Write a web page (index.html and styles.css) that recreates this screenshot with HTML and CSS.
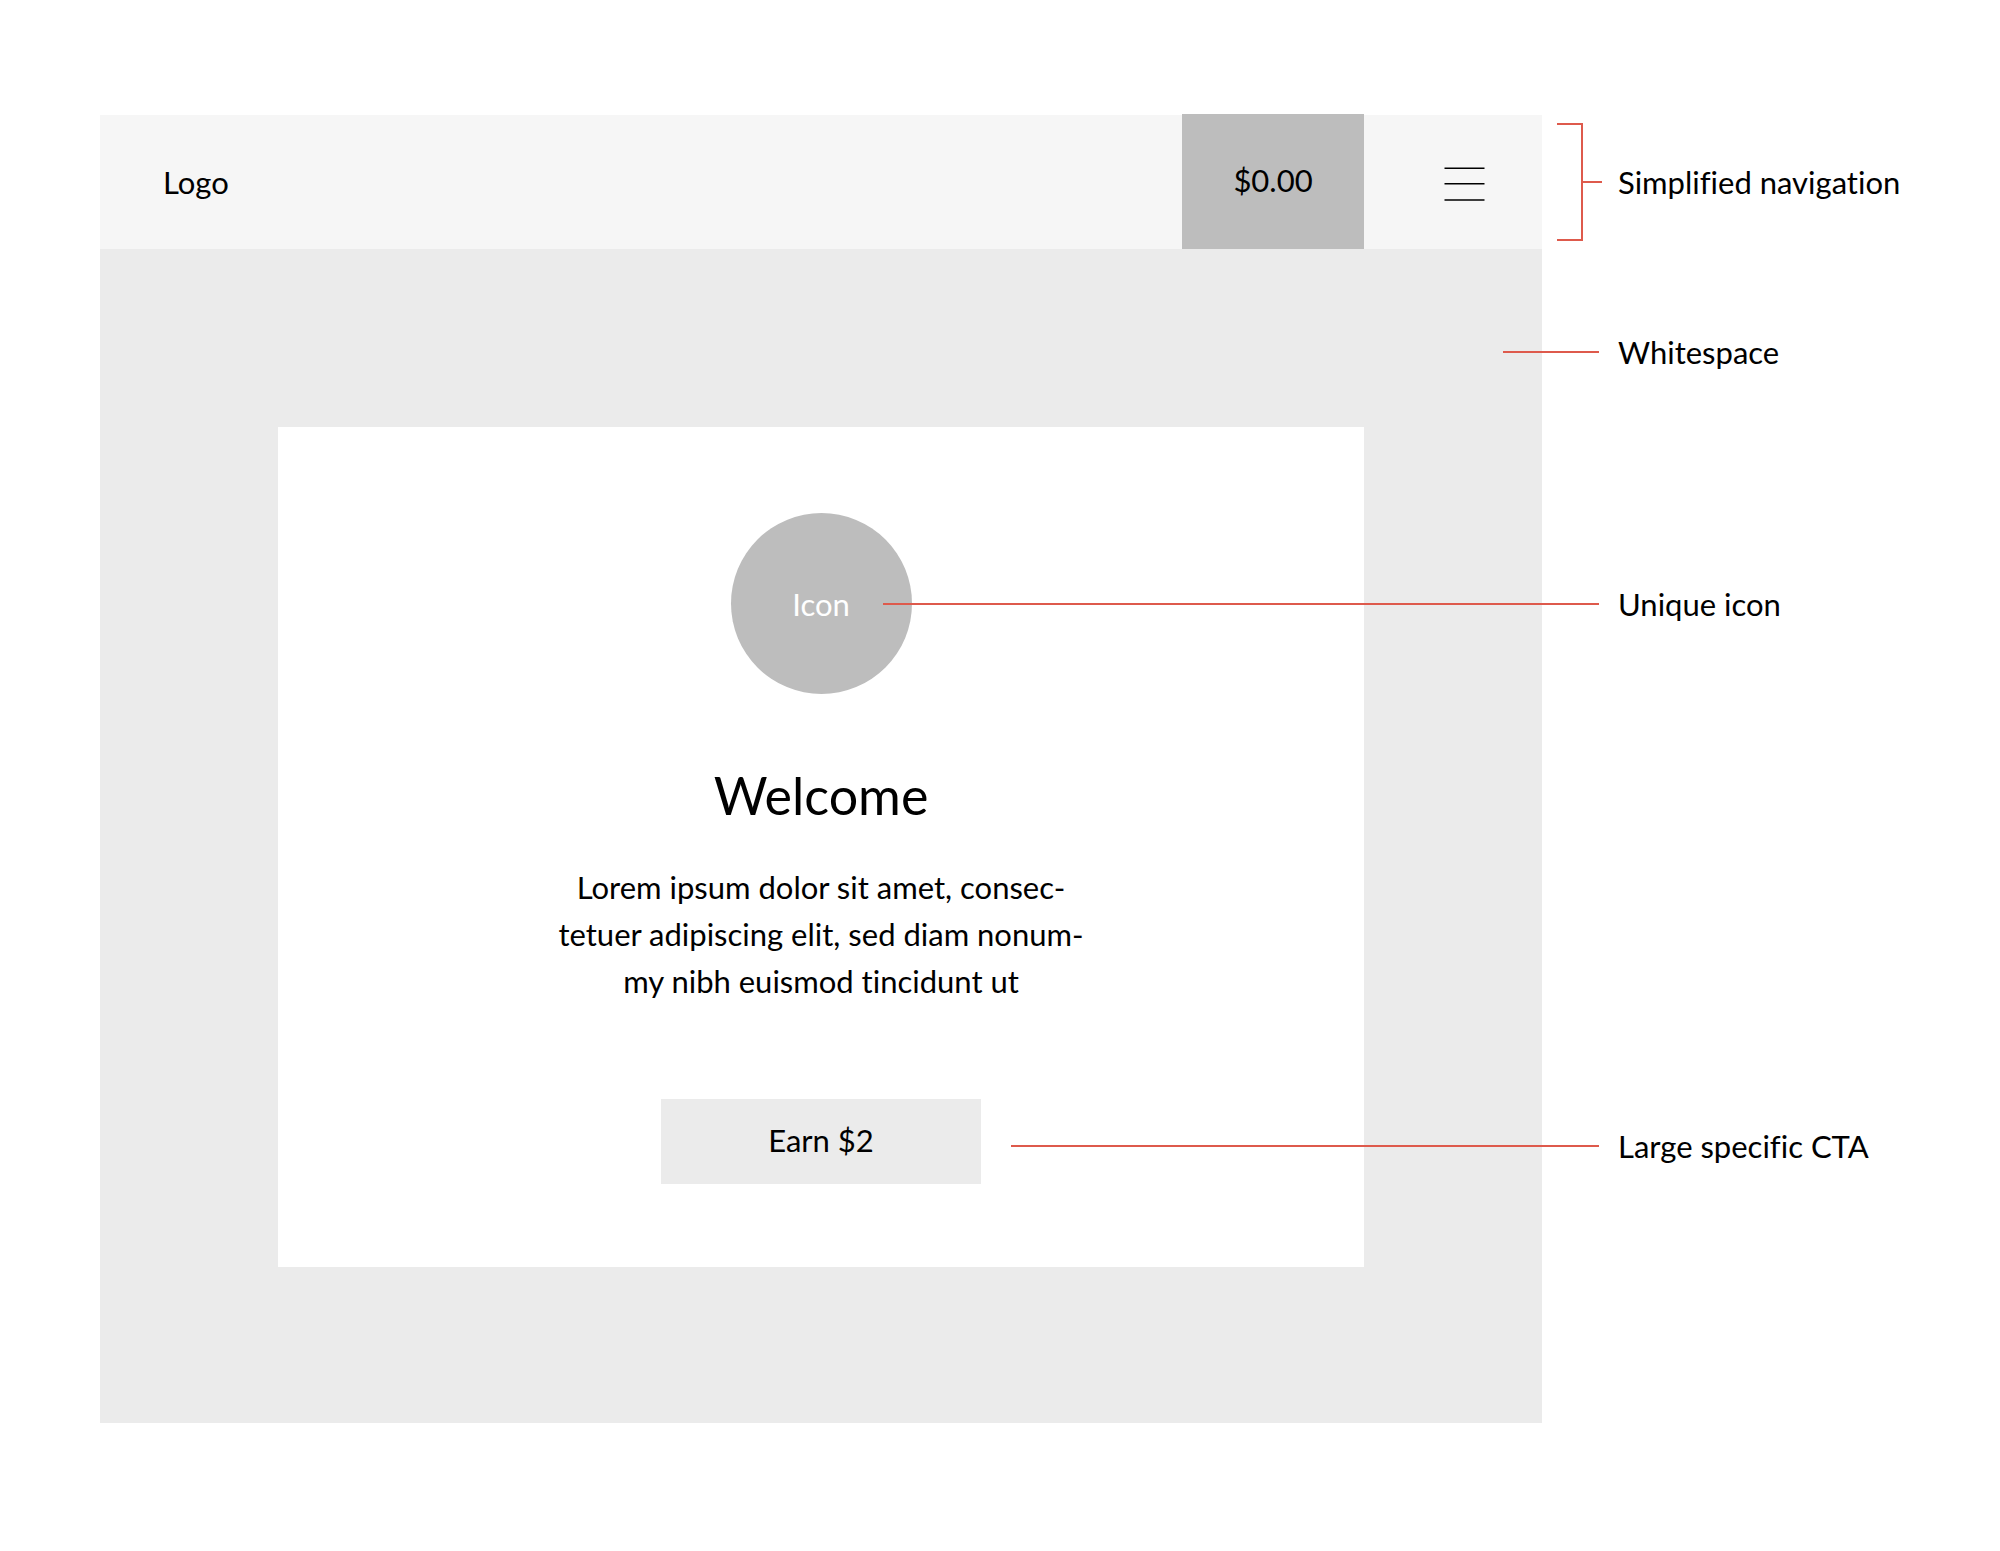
FILE: index.html
```html
<!DOCTYPE html>
<html lang="en">
<head>
<meta charset="utf-8">
<meta name="viewport" content="width=device-width, initial-scale=1">
<title>Welcome wireframe</title>
<link rel="stylesheet" href="styles.css">
</head>
<body>
<div class="sheet">
  <div class="frame">
    <header class="topbar">
      <a class="logo" href="#">Logo</a>
      <span class="balance">$0.00</span>
      <button class="menu" type="button" aria-label="Menu">
        <svg width="41" height="36" viewBox="0 0 41 36" fill="none" stroke="#000" stroke-width="1.5" aria-hidden="true">
          <path d="M.5 2.25H40.5M.5 17.75H40.5M.5 34H40.5"/>
        </svg>
      </button>
    </header>
    <main class="stage">
      <section class="panel">
        <div class="badge">Icon</div>
        <h1 class="title">Welcome</h1>
        <p class="copy">Lorem ipsum dolor sit amet, consec-<br>tetuer adipiscing elit, sed diam nonum-<br>my nibh euismod tincidunt ut</p>
        <button class="cta" type="button">Earn $2</button>
      </section>
    </main>
  </div>

  <ul class="notes">
    <li class="note note-nav"><span class="bracket"></span><span class="stub"></span><span class="label">Simplified navigation</span></li>
    <li class="note note-space"><span class="rule"></span><span class="label">Whitespace</span></li>
    <li class="note note-icon"><span class="rule"></span><span class="label">Unique icon</span></li>
    <li class="note note-cta"><span class="rule"></span><span class="label">Large specific CTA</span></li>
  </ul>
</div>
</body>
</html>
```
FILE: styles.css
```css
:root {
  --notes-width: 458px;
  --label-width: 382px;
  --grey-light: #f6f6f6;
  --grey: #ebebeb;
  --grey-dark: #bdbdbd;
  --red: #de5a4c;
}

* {
  box-sizing: border-box;
}

body {
  margin: 0;
  background: #fff;
  color: #000;
  font: 31px/36px Lato, "Open Sans", sans-serif;
  font-variant-ligatures: none;
}

.sheet {
  position: relative;
  margin: 115px var(--notes-width) 128px 100px;
}

/* Top bar */
.topbar {
  display: flex;
  align-items: center;
  height: 134px;
  padding-left: 63px;
  background: var(--grey-light);
}

.logo {
  color: inherit;
  text-decoration: none;
}

.balance {
  display: flex;
  align-items: center;
  justify-content: center;
  align-self: stretch;
  width: 182px;
  margin: -1px 0 0 auto;
  padding-bottom: 4px;
  background: var(--grey-dark);
}

.menu {
  display: flex;
  align-items: center;
  align-self: stretch;
  width: 178px;
  padding: 4px 0 0 80px;
  border: 0;
  background: none;
}

/* Stage and welcome panel */
.stage {
  padding: 178px 178px 156px;
  background: var(--grey);
}

.panel {
  display: flex;
  flex-direction: column;
  align-items: center;
  padding: 86px 24px 83px;
  background: #fff;
  text-align: center;
}

.badge {
  display: flex;
  align-items: center;
  justify-content: center;
  width: 181px;
  height: 181px;
  border-radius: 50%;
  background: var(--grey-dark);
  color: #fff;
}

.title {
  margin: 71px 0 0;
  font-size: 52px;
  font-weight: 400;
  line-height: 60px;
}

.copy {
  margin: 39px 0 0;
  line-height: 47px;
}

.cta {
  width: 320px;
  height: 85px;
  margin-top: 94px;
  padding: 0 0 4px;
  border: 0;
  background: var(--grey);
  color: inherit;
  font: inherit;
}

/* Call-outs, laid over the frame and running out to its right */
.notes {
  margin: 0;
  padding: 0;
  list-style: none;
}

.note {
  position: absolute;
  right: calc(-1 * var(--notes-width));
  display: flex;
  align-items: center;
  height: 36px;
}

.note-nav {
  top: 8px;
  left: calc(100% + 15px);
  height: 118px;
}

.note-space {
  top: 219px;
  left: calc(100% - 39px);
}

.note-icon {
  top: 471px;
  left: calc(50% + 62px);
}

.note-cta {
  top: 1013px;
  left: calc(50% + 190px);
}

.rule {
  flex: 1;
  height: 2px;
  margin-right: 19px;
  background: var(--red);
}

.bracket {
  align-self: stretch;
  width: 26px;
  border: solid var(--red);
  border-width: 2px 2px 2px 0;
}

.stub {
  flex: 1;
  height: 2px;
  margin-right: 16px;
  background: var(--red);
}

.label {
  width: var(--label-width);
}
```
